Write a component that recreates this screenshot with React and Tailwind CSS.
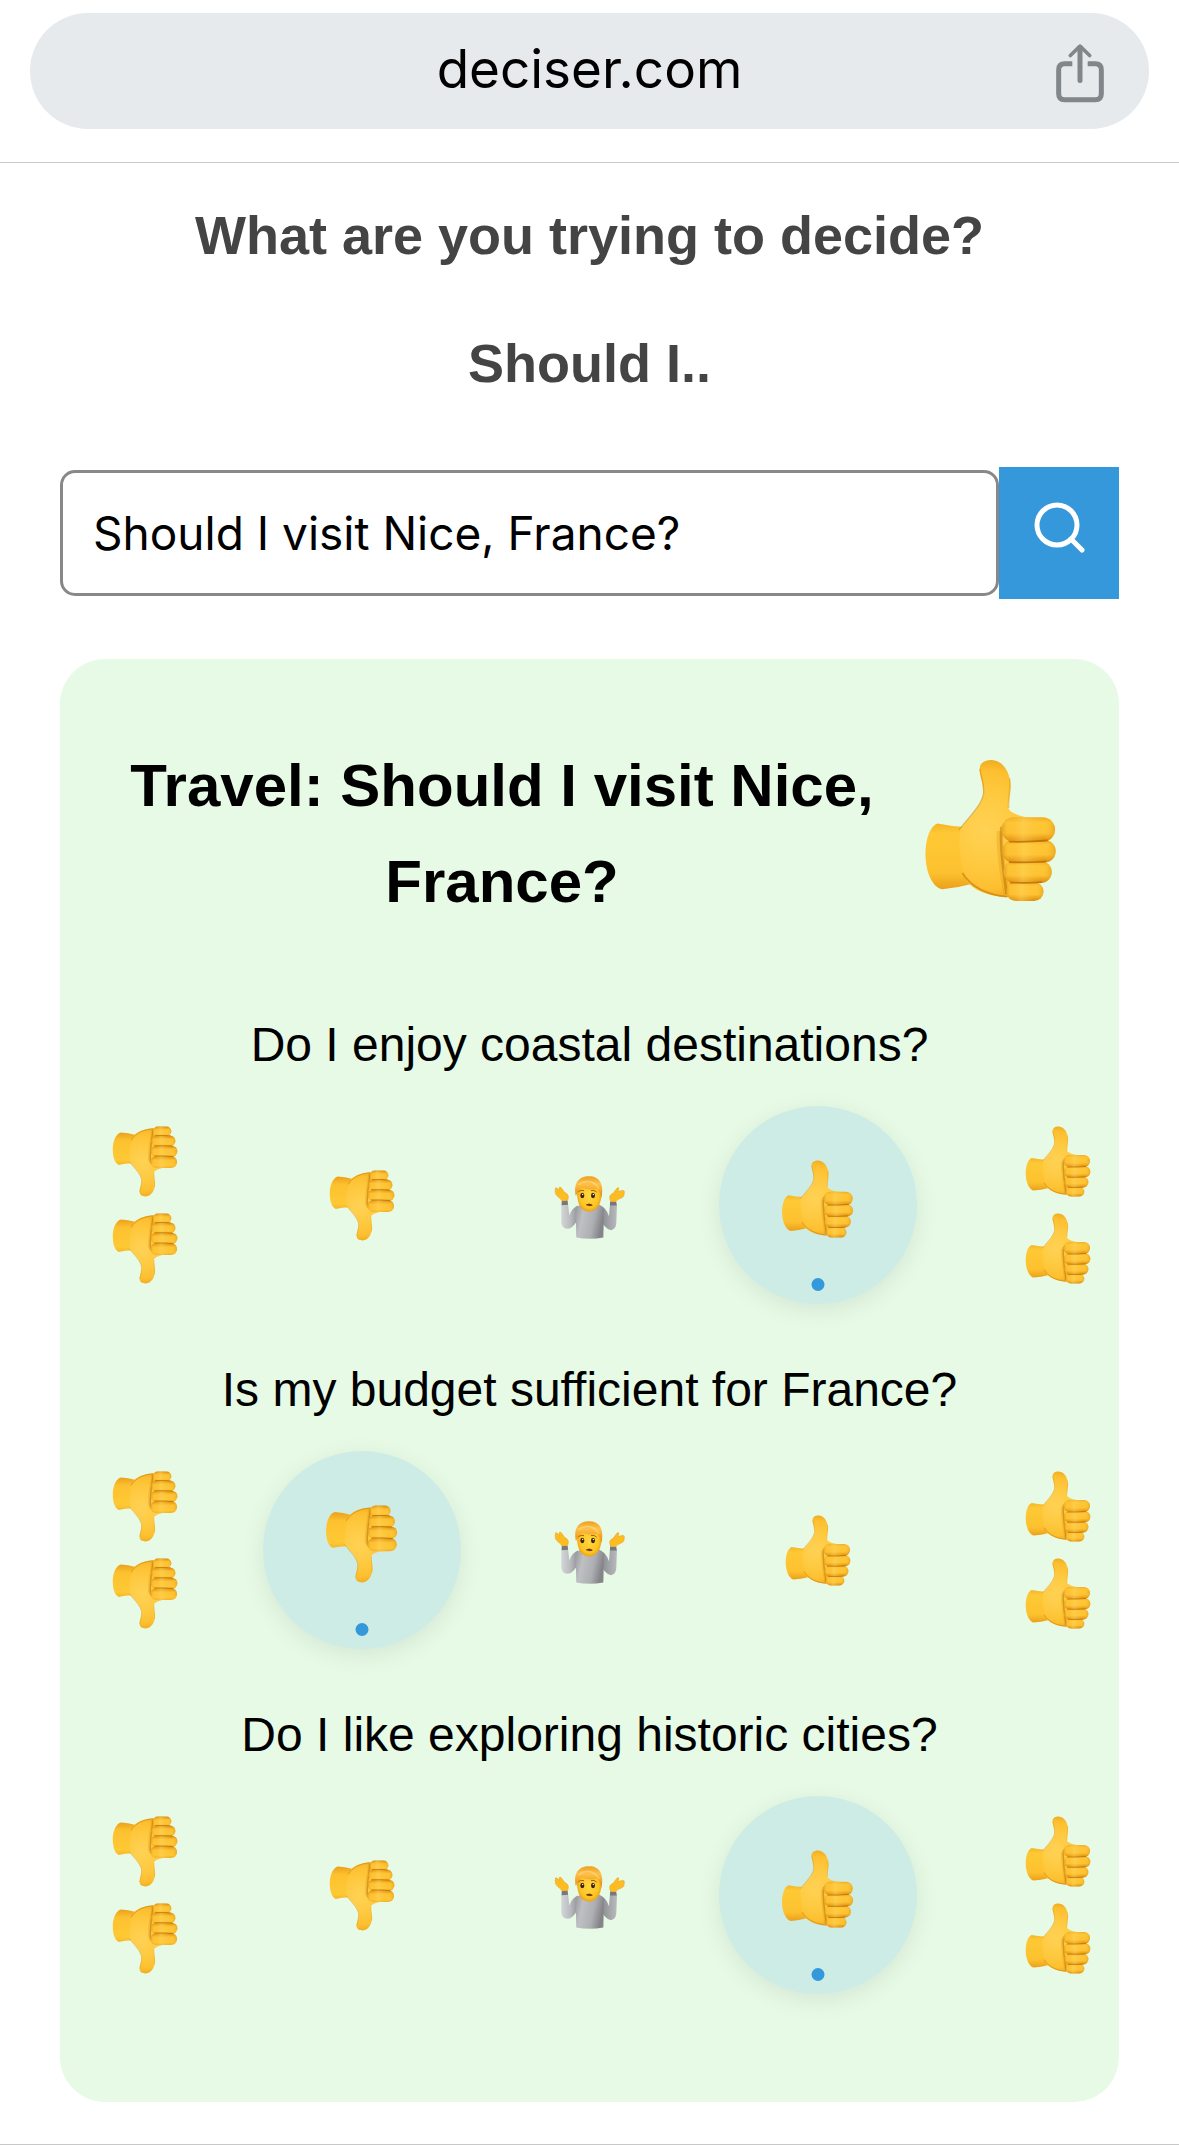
import { useState } from 'react'

const QUESTIONS = [
  { id: 'coastal', text: 'Do I enjoy coastal destinations?', answer: 3 },
  { id: 'budget', text: 'Is my budget sufficient for France?', answer: 1 },
  { id: 'historic', text: 'Do I like exploring historic cities?', answer: 3 },
]

const OPTIONS = ['Strong no', 'No', 'Not sure', 'Yes', 'Strong yes']

function EmojiDefs() {
  return (
    <svg className="absolute h-0 w-0" aria-hidden="true">
      <defs>
        <linearGradient id="wrist" x1="0" y1="0" x2="0" y2="1">
          <stop offset="0" stopColor="#f5b526" />
          <stop offset="0.15" stopColor="#fec935" />
          <stop offset="0.75" stopColor="#fdc12f" />
          <stop offset="1" stopColor="#eaa01a" />
        </linearGradient>
        <radialGradient id="palm" gradientUnits="userSpaceOnUse" cx="255" cy="270" r="225">
          <stop offset="0" stopColor="#ffd255" />
          <stop offset="0.5" stopColor="#fec93f" />
          <stop offset="0.8" stopColor="#fdbf30" />
          <stop offset="1" stopColor="#eba51a" />
        </radialGradient>
        <linearGradient id="finger" x1="0" y1="0" x2="0" y2="1">
          <stop offset="0" stopColor="#f0ac22" />
          <stop offset="0.22" stopColor="#fec636" />
          <stop offset="0.65" stopColor="#fdc233" />
          <stop offset="1" stopColor="#d98709" />
        </linearGradient>
        <linearGradient id="fingerGlow" x1="0" y1="0" x2="1" y2="0">
          <stop offset="0" stopColor="#b86a00" stopOpacity="0.4" />
          <stop offset="0.12" stopColor="#ffb52a" stopOpacity="0.1" />
          <stop offset="0.4" stopColor="#ffd65c" stopOpacity="0.5" />
          <stop offset="0.8" stopColor="#ffc42e" stopOpacity="0" />
          <stop offset="1" stopColor="#d98a0c" stopOpacity="0.45" />
        </linearGradient>
        <linearGradient id="sweater" x1="0" y1="0" x2="1" y2="0.25">
          <stop offset="0" stopColor="#97979a" />
          <stop offset="0.3" stopColor="#bfc0c3" />
          <stop offset="0.7" stopColor="#aeafb2" />
          <stop offset="1" stopColor="#858589" />
        </linearGradient>
        <linearGradient id="sleeve" x1="0" y1="0" x2="1" y2="0">
          <stop offset="0" stopColor="#d3d5d8" />
          <stop offset="0.5" stopColor="#b9bbbe" />
          <stop offset="1" stopColor="#8b8c90" />
        </linearGradient>
        <linearGradient id="sleeveRight" x1="0" y1="0" x2="1" y2="0">
          <stop offset="0" stopColor="#828387" />
          <stop offset="0.6" stopColor="#a4a5a9" />
          <stop offset="1" stopColor="#b9babd" />
        </linearGradient>
        <radialGradient id="face" cx="0.5" cy="0.5" r="0.55">
          <stop offset="0" stopColor="#ffd83f" />
          <stop offset="0.7" stopColor="#fdc424" />
          <stop offset="1" stopColor="#e8960f" />
        </radialGradient>
        <linearGradient id="hair" x1="0" y1="0" x2="0" y2="1">
          <stop offset="0" stopColor="#ee9f22" />
          <stop offset="0.35" stopColor="#fdc24a" />
          <stop offset="0.6" stopColor="#f5ab32" />
          <stop offset="1" stopColor="#d98218" />
        </linearGradient>
      </defs>
    </svg>
  )
}

const FINGERS = [
  { x: 317, y: 429, w: 113, h: 58 },
  { x: 308, y: 366, w: 147, h: 66 },
  { x: 304, y: 302, w: 163, h: 68 },
  { x: 302, y: 233, w: 163, h: 74 },
]

function Thumb({ down = false, className }) {
  return (
    <svg viewBox="68 56 402 434" className={className} aria-hidden="true">
      <g transform={down ? 'translate(0 546) scale(1 -1)' : undefined}>
        <path
          d="M108 252 C80 264 71 310 72 355 C74 408 98 448 122 451 Q165 448 208 436 L190 262 Q145 260 108 252Z"
          fill="url(#wrist)"
        />
        <path
          d="M236 86 C236 66 256 58 274 59 C310 62 330 100 330 140 C329 170 320 192 324 208 C336 224 362 230 392 236 L392 470 Q350 478 318 475 C275 474 232 462 203 434 C176 402 172 310 176 270 C215 226 246 190 249 160 C248 125 236 112 236 86Z"
          fill="url(#palm)"
        />
        <path d="M324 205 C322 175 331 150 327 115" fill="none" stroke="#e59c18" strokeWidth="5" opacity="0.5" />
        <path d="M237 86 C240 112 250 130 248 160 C245 190 212 226 173 271" fill="none" stroke="#dd9413" strokeWidth="4" opacity="0.7" />
        <path d="M184 402 C208 444 262 470 320 474" fill="none" stroke="#cf810a" strokeWidth="5" opacity="0.75" />
        <path d="M298 275 C294 340 308 400 318 468" fill="none" stroke="#d98a0c" strokeWidth="20" opacity="0.25" />
        <path d="M302 262 C296 330 310 400 318 466" fill="none" stroke="#b96d04" strokeWidth="8" opacity="0.5" />
        {FINGERS.map((f) => (
          <g key={f.y}>
            <rect x={f.x} y={f.y} width={f.w} height={f.h} rx={f.h / 2} fill="url(#finger)" />
            <rect x={f.x} y={f.y} width={f.w} height={f.h} rx={f.h / 2} fill="url(#fingerGlow)" />
          </g>
        ))}
        <path d="M325 307 Q385 309 443 303" fill="none" stroke="#b66a04" strokeWidth="5" opacity="0.75" />
        <path d="M325 369 Q385 371 438 367" fill="none" stroke="#b66a04" strokeWidth="5" opacity="0.75" />
        <path d="M328 431 Q380 433 425 430" fill="none" stroke="#b66a04" strokeWidth="5" opacity="0.75" />
      </g>
    </svg>
  )
}

function Shrug({ className }) {
  return (
    <svg viewBox="40 43 216 194" className={className} aria-hidden="true">
      <path d="M62 128 L82 127 L86 164 Q94 140 112 134 L116 166 Q100 202 82 204 Q63 204 62 184Z" fill="url(#sleeve)" />
      <path d="M229 130 L208 129 L205 166 Q197 142 180 135 L174 168 Q192 206 211 208 Q226 206 227 186Z" fill="url(#sleeveRight)" />
      <path d="M105 146 Q110 132 128 130 L168 130 Q186 132 190 146 L188 230 Q147 238 107 230Z" fill="url(#sweater)" />
      <path d="M63 120 L81 119 L82 132 L63 133Z" fill="#77787c" />
      <path d="M208 122 L227 123 L228 134 L208 134Z" fill="#77787c" />
      <path
        d="M64 120 L80 119 C86 108 82 98 72 95 L61 80 Q54 77 56 84 L58 89 L47 81 Q41 81 45 87 Q41 89 45 94 Q42 98 47 102 C52 110 60 112 64 120Z"
        fill="#fdbd22"
        stroke="#f0a31a"
        strokeWidth="2"
      />
      <path
        d="M226 122 L210 121 C205 110 207 101 217 98 L229 82 Q235 78 234 85 L231 92 L246 89 Q253 89 250 94 Q254 97 249 101 Q252 105 247 108 C240 114 230 114 226 122Z"
        fill="#fdbd22"
        stroke="#f0a31a"
        strokeWidth="2"
      />
      <path d="M109 94 C109 64 128 58 147 58 C171 58 183 72 182 102 C182 134 166 152 145 152 C124 152 109 132 109 94Z" fill="url(#face)" />
      <path
        d="M106 106 C96 66 116 45 146 46 C176 46 192 70 182 112 Q180 94 170 83 C150 90 132 84 121 80 Q111 88 106 106Z"
        fill="url(#hair)"
      />
      <path d="M116 70 Q130 58 150 63 Q166 68 174 82" fill="none" stroke="#ffdf8f" strokeWidth="5" strokeLinecap="round" opacity="0.5" />
      <ellipse cx="125" cy="104" rx="6" ry="8" fill="#3b2211" />
      <ellipse cx="157" cy="104" rx="6" ry="8" fill="#3b2211" />
      <circle cx="126" cy="101" r="2" fill="#fff" />
      <circle cx="158" cy="101" r="2" fill="#fff" />
      <path d="M114 92 Q121 86 129 89 M152 89 Q161 86 167 93" fill="none" stroke="#a8620c" strokeWidth="3" strokeLinecap="round" />
      <path d="M137 132 Q146 126 155 133 Q146 137 137 132Z" fill="#6b2f10" stroke="#6b2f10" strokeWidth="2" />
    </svg>
  )
}

function ShareIcon() {
  return (
    <svg viewBox="102 68 150 182" className="h-[61px] w-[50px]" fill="none" stroke="#80868a" strokeWidth="15" aria-hidden="true">
      <path d="M154 130 H131 Q113 130 113 148 V220 Q113 238 131 238 H223 Q241 238 241 220 V148 Q241 130 223 130 H200" />
      <path d="M177 180 V82" strokeLinecap="round" />
      <path d="M148 105 L177 77 L206 105" strokeWidth="11" strokeLinecap="round" strokeLinejoin="round" />
    </svg>
  )
}

function SearchIcon() {
  return (
    <svg viewBox="0 0 52 52" className="h-[52px] w-[52px]" fill="none" stroke="#fff" strokeWidth="5" strokeLinecap="round" aria-hidden="true">
      <circle cx="24" cy="24" r="20" />
      <path d="M38 38 L49 49" />
    </svg>
  )
}

function OptionIcon({ index, selected }) {
  const size = selected ? 'mb-3 h-[78px] w-[73px]' : 'h-[71px] w-[66px]'

  if (index === 2) return <Shrug className="mt-1 h-[65px] w-[72px]" />
  if (index === 1 || index === 3) return <Thumb down={index === 1} className={size} />
  return (
    <span className="flex flex-col gap-4">
      <Thumb down={index === 0} className={size} />
      <Thumb down={index === 0} className={size} />
    </span>
  )
}

function Question({ text, value, onChange }) {
  return (
    <section>
      <h3 className="text-center text-[48px] leading-[56px]">{text}</h3>
      <div className="mt-[33px] flex items-center gap-[30px] pr-7 pl-[52px]">
        {OPTIONS.map((label, i) => {
          const selected = value === i
          const outer = i === 0 || i === 4
          return (
            <button
              key={label}
              type="button"
              aria-label={label}
              aria-pressed={selected}
              onClick={() => onChange(i)}
              className={
                (outer ? 'flex h-[198px] grow items-center ' : 'relative flex size-[198px] shrink-0 items-center justify-center rounded-full ') +
                (i === 0 ? 'basis-[120px] ' : '') +
                (i === 4 ? 'basis-[144px] justify-end ' : '') +
                (selected && !outer ? 'bg-[#cdece6] shadow-[0_6px_24px_rgba(0,0,0,0.08)]' : '')
              }
            >
              <OptionIcon index={i} selected={selected} />
              {selected && !outer && (
                <span className="absolute bottom-[13px] left-1/2 size-[13px] -translate-x-1/2 rounded-full bg-[#3498db]" />
              )}
            </button>
          )
        })}
      </div>
    </section>
  )
}

export default function App() {
  const [query, setQuery] = useState('Should I visit Nice, France?')
  const [answers, setAnswers] = useState(() => Object.fromEntries(QUESTIONS.map((q) => [q.id, q.answer])))

  return (
    <div className="border-b border-[#c8c8c8] bg-white pb-[42px] font-['Liberation_Sans',Arial,sans-serif] text-black">
      <EmojiDefs />

      <header className="border-b border-[#c8cacb] px-[30px] pt-[13px] pb-[33px]">
        <div className="grid h-[116px] grid-cols-[1fr_auto_1fr] items-center rounded-full bg-[#e6eaed]">
          <span className="col-start-2 pb-1 font-['Inter',sans-serif] text-[53px] leading-[64px]">deciser.com</span>
          <button type="button" aria-label="Share" className="mr-11 justify-self-end pt-1">
            <ShareIcon />
          </button>
        </div>
      </header>

      <main className="px-[60px] pt-10">
        <h1 className="text-center text-[54px] leading-[64px] font-bold text-[#444]">What are you trying to decide?</h1>
        <h2 className="mt-16 text-center text-[54px] leading-[64px] font-bold text-[#444]">Should I..</h2>

        <form className="mt-[72px] flex items-center" onSubmit={(e) => e.preventDefault()}>
          <input
            type="text"
            aria-label="Your decision"
            value={query}
            onChange={(e) => setQuery(e.target.value)}
            className="h-[126px] min-w-0 flex-1 rounded-[15px] border-3 border-[#888] bg-white px-[30px] font-['Inter',sans-serif] text-[46px] outline-none"
          />
          <button type="submit" aria-label="Search" className="flex h-[132px] w-[120px] justify-center bg-[#3498db] pt-[34px]">
            <SearchIcon />
          </button>
        </form>

        <div className="mt-[60px] rounded-[45px] bg-[#e6fae6] pt-[79px] pb-[108px]">
          <div className="flex items-center gap-5 pr-[62px] pl-10">
            <h2 className="flex-1 text-center text-[60px] leading-[96px] font-bold">Travel: Should I visit Nice, France?</h2>
            <Thumb className="mb-2 h-[143px] w-[133px] shrink-0" />
          </div>

          <div className="mt-[87px] flex flex-col gap-[58px]">
            {QUESTIONS.map((q) => (
              <Question
                key={q.id}
                text={q.text}
                value={answers[q.id]}
                onChange={(i) => setAnswers({ ...answers, [q.id]: i })}
              />
            ))}
          </div>
        </div>
      </main>
    </div>
  )
}
